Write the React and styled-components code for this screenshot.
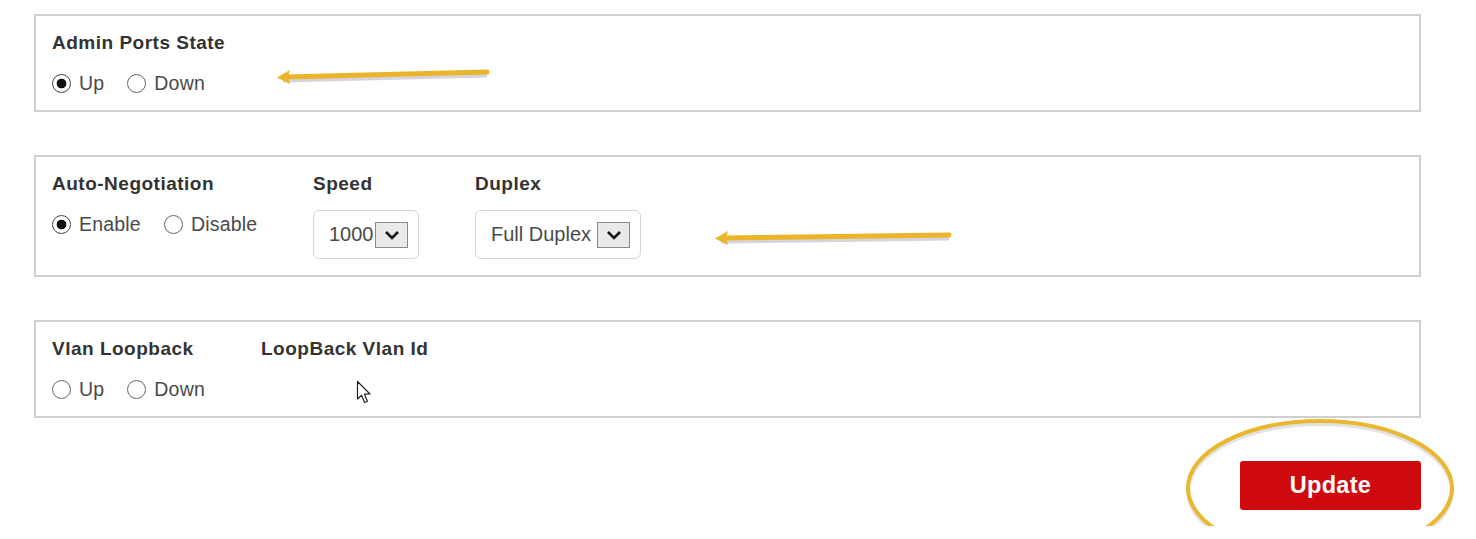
import React from "react";
import styled, { createGlobalStyle } from "styled-components";

const GlobalStyle = createGlobalStyle`
  body {
    margin: 0;
    background: #ffffff;
    font-family: "Liberation Sans", Arial, sans-serif;
    color: #333;
  }
`;

const Page = styled.div`
  width: 1476px;
  height: 539px;
  box-sizing: border-box;
  padding: 14px 55px 0 34px;
  display: flex;
  flex-direction: column;
  gap: 43px;
  overflow: hidden;
`;

const Panel = styled.section`
  position: relative;
  border: 2px solid #cfcfcf;
  box-sizing: border-box;
  height: ${(p) => p.h}px;
  flex-shrink: 0;
  padding: 16px 16px 0 16px;
  display: flex;
`;

const Field = styled.div`
  position: relative;
  width: ${(p) => (p.w ? `${p.w}px` : "auto")};
  display: flex;
  flex-direction: column;
`;

const Title = styled.div`
  font-size: 19px;
  font-weight: bold;
  letter-spacing: 0.5px;
  line-height: 22px;
  color: #333;
`;

const RadioRow = styled.div`
  display: flex;
  align-items: center;
  gap: 23px;
  margin-top: 17px;
  height: 24px;
`;

const Option = styled.label`
  display: flex;
  align-items: center;
  gap: 8px;
  font-size: 19.5px;
  letter-spacing: 0.2px;
  color: #4a4a4a;
`;

const Radio = styled.input.attrs({ type: "radio" })`
  appearance: none;
  margin: 0;
  width: 19px;
  height: 19px;
  border-radius: 50%;
  border: 1.5px solid #666;
  box-sizing: border-box;
  background: #fff;

  &:checked {
    border-color: #444;
    background: radial-gradient(circle, #111 0 4.5px, #fff 5.2px);
  }
`;

const Select = styled.div`
  margin-top: 15px;
  height: 49px;
  width: ${(p) => p.w}px;
  box-sizing: border-box;
  border: 1.5px solid #d6d6d6;
  border-radius: 6px;
  display: flex;
  align-items: center;
  justify-content: space-between;
  padding: 0 10px 0 15px;
  font-size: 20px;
  color: #4a4a4a;
`;

const DropBox = styled.span`
  width: 33px;
  height: 26px;
  box-sizing: border-box;
  background: #e9e9e9;
  border: 1px solid #8a8a8a;
  display: flex;
  align-items: center;
  justify-content: center;
`;

const Footer = styled.div`
  position: relative;
  display: flex;
  justify-content: flex-end;
`;

const UpdateButton = styled.button`
  width: 181px;
  height: 49px;
  border: none;
  border-radius: 3px;
  background: #cf0a0f;
  color: #fff;
  font-family: "Liberation Sans", Arial, sans-serif;
  font-size: 23.5px;
  font-weight: bold;
  letter-spacing: 0.3px;
`;

const Overlay = styled.svg`
  position: absolute;
  pointer-events: none;
  left: ${(p) => p.x}px;
  top: ${(p) => p.y}px;
`;

const Chevron = () => (
  <svg width="16" height="12" viewBox="0 0 16 12">
    <path d="M2 3 L8 9 L14 3" fill="none" stroke="#111" strokeWidth="2.6" />
  </svg>
);

const Arrow = ({ x, y, len, rise }) => (
  <Overlay x={x} y={y} width={len + 10} height="30" viewBox={`0 0 ${len + 10} 30`}>
    <line x1="8" y1={15 + 3} x2={len} y2={15 - rise + 3} stroke="#bdb6c8" strokeWidth="5" opacity="0.6" />
    <line x1="10" y1="15" x2={len} y2={15 - rise} stroke="#eab52a" strokeWidth="5" strokeLinecap="round" />
    <path d="M2 15.5 L15 8 L13 15 L15 22 Z" fill="#eab52a" />
  </Overlay>
);

const Cursor = () => (
  <Overlay x={95} y={42} width="18" height="26" viewBox="0 0 18 26">
    <path
      d="M1.5 1.5 L1.5 19 L5.6 15.2 L8.6 22.5 L11.4 21.3 L8.5 14.2 L14 14 Z"
      fill="#fff"
      stroke="#222"
      strokeWidth="1.2"
      strokeLinejoin="round"
    />
  </Overlay>
);

const Radios = ({ name, options, checked }) => (
  <RadioRow>
    {options.map((o) => (
      <Option key={o}>
        <Radio name={name} defaultChecked={o === checked} />
        {o}
      </Option>
    ))}
  </RadioRow>
);

function App() {
  return (
    <>
      <GlobalStyle />
      <Page>
        <Panel h={98}>
          <Field>
            <Title>Admin Ports State</Title>
            <Radios name="admin" options={["Up", "Down"]} checked="Up" />
          </Field>
          <Arrow x={239} y={46} len={212} rise={5} />
        </Panel>

        <Panel h={122}>
          <Field w={261}>
            <Title>Auto-Negotiation</Title>
            <Radios name="auto" options={["Enable", "Disable"]} checked="Enable" />
          </Field>
          <Field w={162}>
            <Title>Speed</Title>
            <Select w={106}>
              1000
              <DropBox>
                <Chevron />
              </DropBox>
            </Select>
          </Field>
          <Field>
            <Title>Duplex</Title>
            <Select w={166}>
              Full Duplex
              <DropBox>
                <Chevron />
              </DropBox>
            </Select>
          </Field>
          <Arrow x={677} y={66} len={236} rise={3} />
        </Panel>

        <Panel h={98}>
          <Field w={209}>
            <Title>Vlan Loopback</Title>
            <Radios name="loop" options={["Up", "Down"]} />
          </Field>
          <Field>
            <Title>LoopBack Vlan Id</Title>
            <Cursor />
          </Field>
        </Panel>

        <Footer>
          <UpdateButton>Update</UpdateButton>
          <Overlay x={1148} y={-42} width="276" height="107" viewBox="0 0 276 107">
            <ellipse cx="138" cy="69" rx="132" ry="67" fill="none" stroke="#c9c4d0" strokeWidth="4" opacity="0.5" transform="translate(0 3)" />
            <ellipse cx="138" cy="69" rx="132" ry="67" fill="none" stroke="#e8b830" strokeWidth="4" />
          </Overlay>
        </Footer>
      </Page>
    </>
  );
}

export default App;
